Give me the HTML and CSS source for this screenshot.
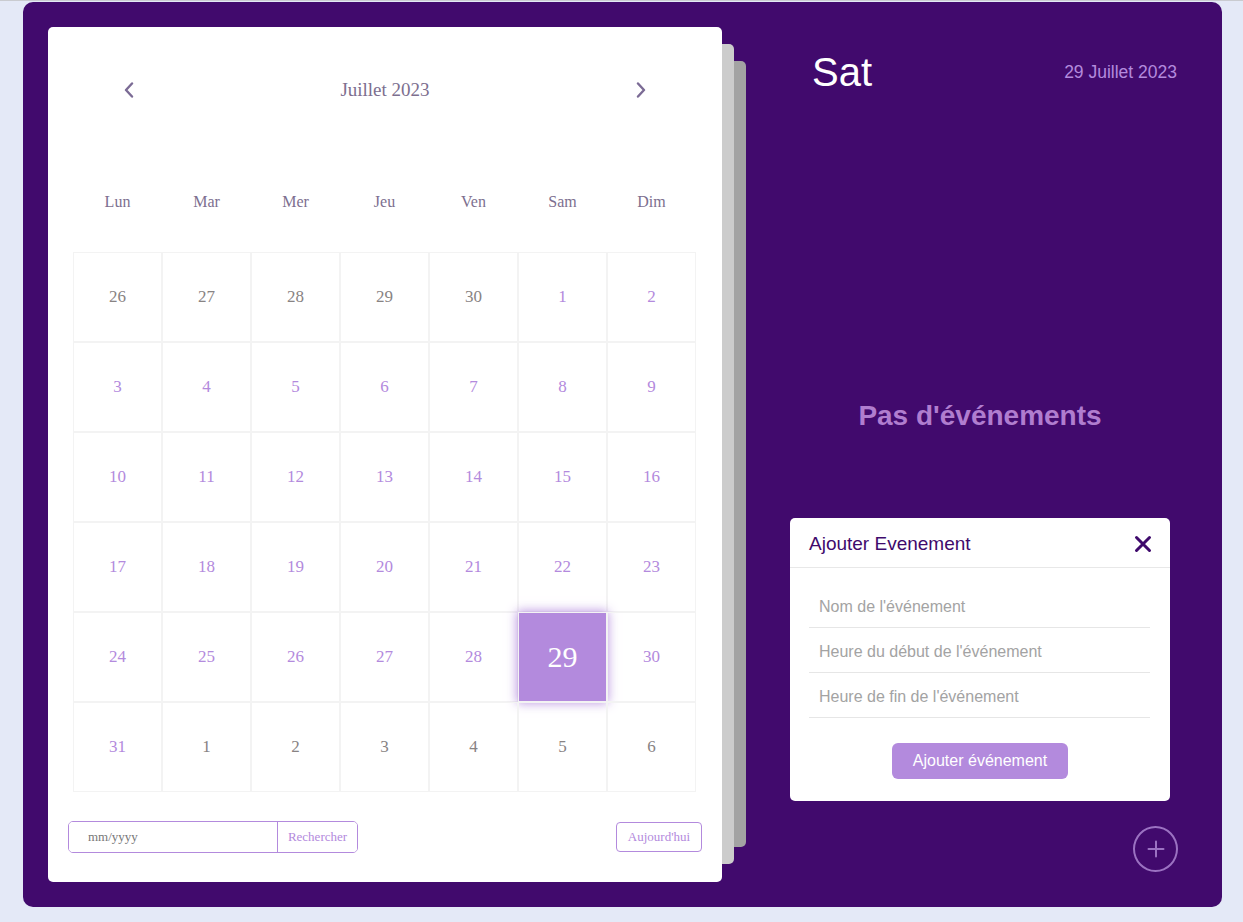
FILE: index.html
```html
<!DOCTYPE html>
<html lang="fr">
<head>
    <meta charset="UTF-8">
    <meta name="viewport" content="width=device-width, initial-scale=1.0">
    <title>Calendrier</title>
    <link rel="stylesheet" href="styles.css">
</head>
<body>
    <div class="container">
        <section class="calendar">
            <div class="cal-head">
                <span class="nav prev">
                    <svg width="10" height="16" viewBox="0 0 10 16"><polyline points="8,1.5 2,8 8,14.5" fill="none" stroke="#7b6b95" stroke-width="2.4" stroke-linecap="round" stroke-linejoin="round"/></svg>
                </span>
                <span class="month">Juillet 2023</span>
                <span class="nav next">
                    <svg width="10" height="16" viewBox="0 0 10 16"><polyline points="2,1.5 8,8 2,14.5" fill="none" stroke="#7b6b95" stroke-width="2.4" stroke-linecap="round" stroke-linejoin="round"/></svg>
                </span>
            </div>
            <div class="weekdays">
                <div>Lun</div><div>Mar</div><div>Mer</div><div>Jeu</div><div>Ven</div><div>Sam</div><div>Dim</div>
            </div>
            <div class="days">
                <div class="day other">26</div><div class="day other">27</div><div class="day other">28</div><div class="day other">29</div><div class="day other">30</div><div class="day">1</div><div class="day">2</div>
                <div class="day">3</div><div class="day">4</div><div class="day">5</div><div class="day">6</div><div class="day">7</div><div class="day">8</div><div class="day">9</div>
                <div class="day">10</div><div class="day">11</div><div class="day">12</div><div class="day">13</div><div class="day">14</div><div class="day">15</div><div class="day">16</div>
                <div class="day">17</div><div class="day">18</div><div class="day">19</div><div class="day">20</div><div class="day">21</div><div class="day">22</div><div class="day">23</div>
                <div class="day">24</div><div class="day">25</div><div class="day">26</div><div class="day">27</div><div class="day">28</div><div class="day active">29</div><div class="day">30</div>
                <div class="day">31</div><div class="day other">1</div><div class="day other">2</div><div class="day other">3</div><div class="day other">4</div><div class="day other">5</div><div class="day other">6</div>
            </div>
            <div class="cal-foot">
                <div class="goto">
                    <input type="text" placeholder="mm/yyyy" class="date-input">
                    <button class="goto-btn">Rechercher</button>
                </div>
                <button class="today-btn">Aujourd'hui</button>
            </div>
        </section>

        <section class="right">
            <div class="today-date">
                <span class="event-day">Sat</span>
                <span class="event-date">29 Juillet 2023</span>
            </div>
            <div class="events">
                <div class="no-event">Pas d'événements</div>
            </div>
            <div class="add-event-wrapper">
                <div class="add-event-header">
                    <span class="title">Ajouter Evenement</span>
                    <svg class="close" width="18" height="18" viewBox="0 0 18 18"><path d="M2.5 2.5 L15.5 15.5 M15.5 2.5 L2.5 15.5" stroke="#3f0a6c" stroke-width="3" stroke-linecap="round"/></svg>
                </div>
                <div class="add-event-body">
                    <input type="text" placeholder="Nom de l'événement" class="event-input">
                    <input type="text" placeholder="Heure du début de l'événement" class="event-input">
                    <input type="text" placeholder="Heure de fin de l'événement" class="event-input">
                </div>
                <div class="add-event-footer">
                    <button class="add-event-btn">Ajouter événement</button>
                </div>
            </div>
            <button class="add-event">
                <svg width="18" height="18" viewBox="0 0 18 18"><path d="M9 1.5 V16.5 M1.5 9 H16.5" stroke="#9b72c2" stroke-width="2" stroke-linecap="round"/></svg>
            </button>
        </section>
    </div>
</body>
</html>
```

FILE: styles.css
```css
*{margin:0; padding:0; box-sizing: border-box;}
body{background: #e4e9f7; border-top: 1px solid #c9cbd0; font-family: "Liberation Sans", Arial, sans-serif;}
button, input{font-family: inherit;}

.container{position: relative; z-index: 0; display: flex; width: 1199px; height: 905px; margin: 1px 0 0 23px; padding: 25px 0 25px 25px; background: #410a6d; border-radius: 10px;}

/* calendrier a gauche */
.calendar{position: relative; width: 674px; height: 855px; margin-right: 24px; background: #fff; border-radius: 5px; font-family: "Liberation Serif", "Times New Roman", serif;}
.calendar::before{content: ""; position: absolute; top: 17px; bottom: 18px; left: 0; right: -12px; background: #cccccc; border-radius: 5px; z-index: -1;}
.calendar::after{content: ""; position: absolute; top: 34px; bottom: 35px; left: 0; right: -24px; background: #a3a3a3; border-radius: 5px; z-index: -2;}

.cal-head{display: flex; justify-content: space-between; align-items: center; height: 26px; margin-top: 50px; padding: 0 76px;}
.cal-head .nav{display: flex; width: 10px; height: 16px;}
.cal-head .month{font-size: 19px; color: #7d6f8f;}

.weekdays{display: grid; grid-template-columns: repeat(7, 89px); margin-top: 89px; padding: 0 25px; line-height: 20px; font-size: 16px; color: #7d6f8f; text-align: center;}

.days{display: grid; grid-template-columns: repeat(7, 89px); grid-auto-rows: 90px; margin-top: 40px; padding: 0 25px;}
.day{display: flex; justify-content: center; align-items: center; border: 1px solid #f3f3f3; font-size: 17px; color: #b38add;}
.day.other{color: #888383;}
.day.active{background: #b38add; background-clip: padding-box; color: #fff; font-size: 30px; box-shadow: inset 0 0 0 0 #fff, 0 0 10px 1px rgba(179, 138, 221, 0.9);}

.cal-foot{display: flex; justify-content: space-between; align-items: center; margin-top: 29px; padding: 0 20px;}
.goto{display: flex; width: 290px; height: 32px; border: 1px solid #b38add; border-radius: 5px; overflow: hidden;}
.date-input{width: 208px; height: 100%; padding-left: 19px; border: none; outline: none; font-family: "Liberation Serif", serif; font-size: 13px; color: #666;}
.date-input::placeholder{color: #777;}
.goto-btn{flex: 1; border: none; border-left: 1px solid #b38add; background: #fff; color: #b38add; font-family: "Liberation Serif", serif; font-size: 13px;}
.today-btn{width: 86px; height: 30px; border: 1px solid #b38add; border-radius: 4px; background: #fff; color: #b38add; font-family: "Liberation Serif", serif; font-size: 13px;}

/* partie droite */
.right{display: flex; flex-direction: column; flex: 1; padding: 0 45px 0 44px;}
.today-date{display: flex; justify-content: space-between; align-items: center; margin-top: 22px; padding-left: 22px;}
.event-day{font-size: 40px; line-height: 46px; color: #fff;}
.event-date{font-size: 17.5px; color: #b38add;}

.events{width: 380px; margin-top: 305px; text-align: center;}
.no-event{font-size: 28px; line-height: 32px; font-weight: bold; color: #b07dcf;}

.add-event-wrapper{width: 380px; margin-top: 86px; background: #fff; border-radius: 5px;}
.add-event-header{display: flex; justify-content: space-between; align-items: center; height: 50px; padding: 2px 18px 0 19px; border-bottom: 1px solid #e8e8e8;}
.add-event-header .title{font-size: 19px; color: #3f0a6c;}
.add-event-body{display: flex; flex-direction: column; padding: 15px 20px 0 19px;}
.event-input{height: 45px; padding: 4px 10px 0; border: none; border-bottom: 1px solid #e6e6e6; outline: none; font-size: 16px; color: #555;}
.event-input::placeholder{color: #a3a3a3;}
.add-event-footer{display: flex; justify-content: center; padding: 25px 0 22px;}
.add-event-btn{width: 176px; height: 36px; border: none; border-radius: 6px; background: #b38add; color: #fff; font-size: 16px;}

.add-event{display: flex; justify-content: center; align-items: center; align-self: flex-end; width: 45px; height: 46px; margin: 25px -1px 0 0; border: 2px solid #9b72c2; border-radius: 50%; background: transparent;}
```
